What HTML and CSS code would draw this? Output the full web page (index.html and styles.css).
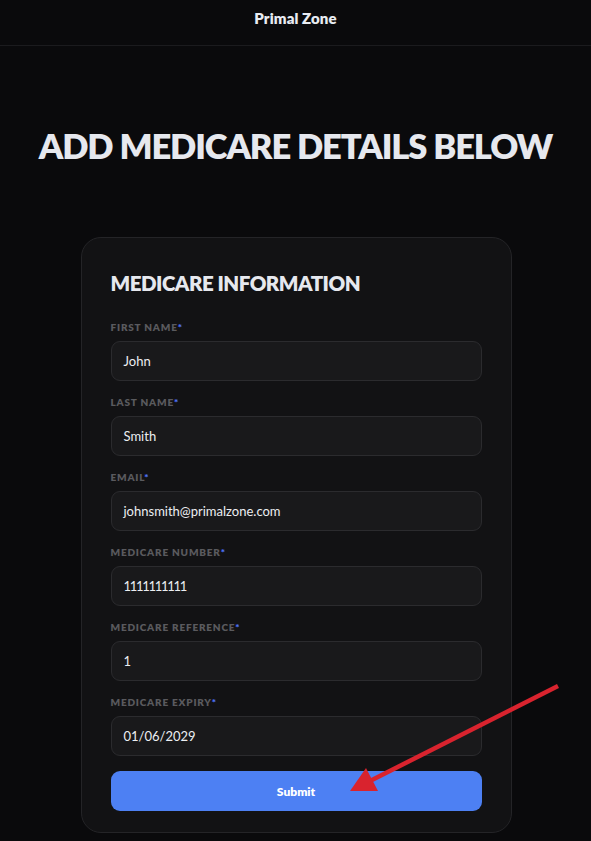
FILE: index.html
```html
<!DOCTYPE html>
<html lang="en">
<head>
<meta charset="utf-8">
<title>Primal Zone</title>
<link rel="stylesheet" href="styles.css">
</head>
<body>
<header class="topbar"><span class="brand">Primal Zone</span></header>
<main class="main">
  <h1 class="page-title">ADD MEDICARE DETAILS BELOW</h1>
  <form class="card">
    <h2 class="card-title">MEDICARE INFORMATION</h2>
    <div class="fields">
      <div class="field">
        <label class="label">FIRST NAME<span class="req">*</span></label>
        <div class="input">John</div>
      </div>
      <div class="field">
        <label class="label">LAST NAME<span class="req">*</span></label>
        <div class="input">Smith</div>
      </div>
      <div class="field">
        <label class="label">EMAIL<span class="req">*</span></label>
        <div class="input">johnsmith@primalzone.com</div>
      </div>
      <div class="field">
        <label class="label">MEDICARE NUMBER<span class="req">*</span></label>
        <div class="input num">1111111111</div>
      </div>
      <div class="field">
        <label class="label">MEDICARE REFERENCE<span class="req">*</span></label>
        <div class="input">1</div>
      </div>
      <div class="field">
        <label class="label">MEDICARE EXPIRY<span class="req">*</span></label>
        <div class="input">01/06/2029</div>
      </div>
      <button type="button" class="submit">Submit</button>
    </div>
  </form>
</main>
<svg class="arrow" width="591" height="841" viewBox="0 0 591 841">
  <line x1="558" y1="686" x2="368" y2="782" stroke="#d9232e" stroke-width="4.5"/>
  <polygon points="350,791 366,768 378,791" fill="#d9232e"/>
</svg>
</body>
</html>
```
FILE: styles.css
```css
* { box-sizing: border-box; }
html, body { margin: 0; padding: 0; }
body {
  background: #0a0a0c;
  color: #e6e8ee;
  font-family: "Lato", "Inter", "Noto Sans", sans-serif;
  width: 591px;
  height: 841px;
  overflow: hidden;
  position: relative;
}
.topbar {
  height: 46px;
  border-bottom: 1px solid #1b1b1e;
  display: flex;
  justify-content: center;
  align-items: flex-start;
  padding-top: 8px;
}
.brand {
  font-weight: 800;
  font-size: 15px;
  line-height: 20px;
  color: #e8ecf2;
  letter-spacing: 0.1px;
}
.main {
  display: flex;
  flex-direction: column;
  align-items: center;
}
.page-title {
  margin: 78px 0 0;
  font-size: 34.5px;
  line-height: 44px;
  font-weight: 800;
  letter-spacing: -1.1px;
  color: #e6e8ee;
  text-align: center;
}
.card {
  margin-top: 69px;
  width: 431px;
  margin-left: 1px;
  background: #121214;
  border: 1px solid #242427;
  border-radius: 20px;
  padding: 29px 29px 21px;
}
.card-title {
  margin: 0 0 22px;
  font-size: 20.5px;
  line-height: 32px;
  font-weight: 800;
  letter-spacing: -0.5px;
  color: #e6e8ee;
}
.fields {
  display: flex;
  flex-direction: column;
  gap: 15px;
}
.field {
  display: flex;
  flex-direction: column;
  gap: 8px;
}
.label {
  font-size: 10px;
  line-height: 12px;
  font-weight: 800;
  letter-spacing: 0.8px;
  color: #5a5a5e;
}
.req { color: #4c6ff0; }
.input {
  height: 40px;
  background: #19191b;
  border: 1px solid #2b2b2e;
  border-radius: 9px;
  padding: 0 12px;
  display: flex;
  align-items: center;
  font-size: 13px;
  color: #eceef2;
}
.num { letter-spacing: -1.3px; }
.submit {
  height: 40px;
  border: none;
  border-radius: 9px;
  background: #4d80f3;
  color: #ffffff;
  font-family: "Lato", "Inter", sans-serif;
  font-weight: 800;
  font-size: 12px;
}
.arrow {
  position: absolute;
  left: 0;
  top: 0;
  pointer-events: none;
}
```
